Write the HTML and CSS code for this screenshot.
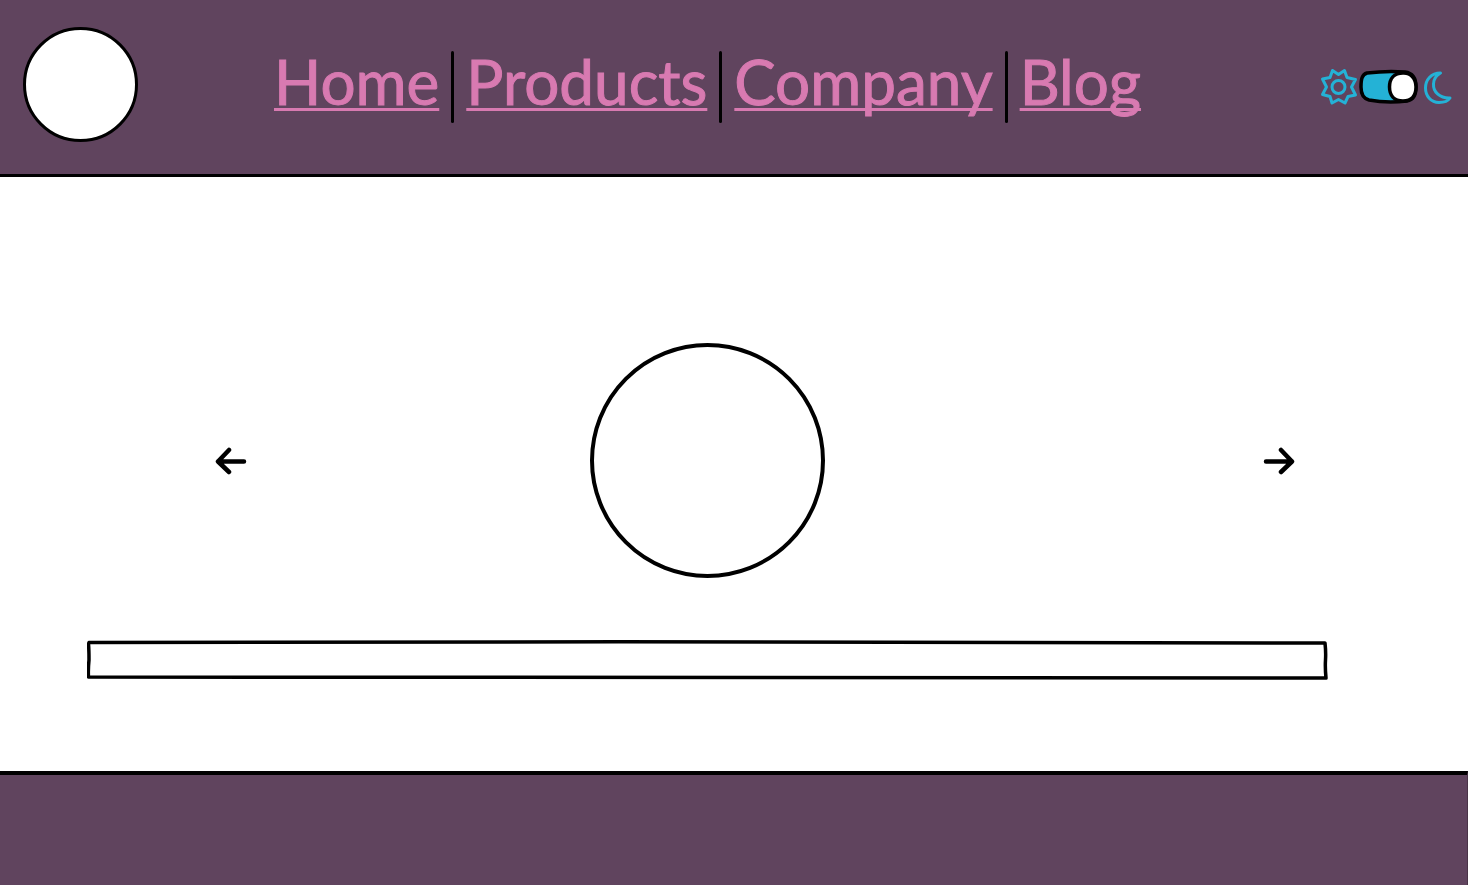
FILE: index.html
```html
<!DOCTYPE html>
<html lang="en">
<head>
<meta charset="utf-8">
<meta name="viewport" content="width=device-width, initial-scale=1">
<title>Home</title>
<link rel="stylesheet" href="styles.css">
</head>
<body>
<header class="header">
  <div class="logo"></div>
  <nav class="nav" aria-label="Main">
    <a class="nav-link" href="#home">Home</a>
    <span class="divider"></span>
    <a class="nav-link" href="#products">Products</a>
    <span class="divider"></span>
    <a class="nav-link" href="#company">Company</a>
    <span class="divider"></span>
    <a class="nav-link" href="#blog">Blog</a>
  </nav>
  <label class="theme">
    <svg class="sun" viewBox="0 0 38 38" aria-hidden="true"><path d="M12.500 2.500 18.500 6.500 24.500 2.500 27 9.500 35.500 11.500 31.500 19 35.500 27 28 28.500 25 35 18.500 31.500 12 35 10 28.500 2.500 26.500 6.500 19 2.500 11 10 9.500Z"/><circle cx="18.500" cy="19" r="6.500"/></svg>
    <span class="toggle">
      <input class="toggle-input" type="checkbox" role="switch" aria-label="Theme" checked>
      <svg class="toggle-art" viewBox="0 0 60 36" aria-hidden="true"><path class="track" d="M8 4Q28 1.500 46 3C54 4 57 10 57 18 57 27 54 31 48 32Q28 34.500 10 31C4 29.500 2 25 2 18 2 10 3 5.500 8 4Z"/><path class="knob" d="M44 4C52 3.500 57 10 57 18 57 27 52 32 44 32 35 32 30.500 26 30.500 18 30.500 10 35 4 44 4Z"/></svg>
    </span>
    <svg class="moon" viewBox="0 0 30 36" aria-hidden="true"><path d="M17.500 4C8 4 2.500 11 2.500 19 2.500 27 8 33.500 16 33.500 21 33.500 25 32 27 29 17 29.500 10 23 10.500 15 10.500 10 14 6 17.500 4Z"/></svg>
  </label>
</header>
<main class="main">
  <section class="carousel" aria-label="Carousel">
    <button class="arrow arrow-prev" type="button" aria-label="Previous"><svg viewBox="0 0 32 28" aria-hidden="true"><path d="M29 14.500H3M14 3 3 14.500 14 25"/></svg></button>
    <div class="slide"></div>
    <button class="arrow arrow-next" type="button" aria-label="Next"><svg viewBox="0 0 32 28" aria-hidden="true"><path d="M3 14.500H29M18 3 29 14.500 18 25"/></svg></button>
  </section>
  <div class="caption">
    <svg class="caption-frame" viewBox="0 0 1241 40" preserveAspectRatio="none" aria-hidden="true"><path d="M2 2.500Q620 1 1238 3 1239 12 1238.500 20T1239 38Q620 39 1.500 37 1 30 2 20 2 10 1.500 4Z"/></svg>
  </div>
</main>
<footer class="footer"></footer>
</body>
</html>
```
FILE: styles.css
```css
* { box-sizing: border-box; }
body {
  margin: 0;
  min-height: 100vh;
  display: flex;
  flex-direction: column;
  background: #fff;
  font-family: Lato, sans-serif;
}
.header {
  display: flex;
  align-items: flex-start;
  padding: 27px 15px 32px 23px;
  background: #60445e;
  border-bottom: 3px solid #000;
}
.logo {
  width: 115px;
  height: 115px;
  border: 3px solid #000;
  border-radius: 50%;
  background: #fff;
}
.nav {
  display: flex;
  align-items: flex-start;
  gap: 12px;
  margin: 24px auto 0 136px;
}
.nav-link {
  color: #d87ab1;
  font-size: 62px;
  line-height: 60px;
  -webkit-text-stroke: 1px #d87ab1;
  text-decoration: underline;
  text-decoration-thickness: 3px;
  text-decoration-skip-ink: none;
  text-underline-offset: 3px;
}
.divider {
  width: 3px;
  height: 72px;
  border-radius: 2px;
  background: #000;
}
.theme {
  display: flex;
  align-items: center;
  margin-top: 41px;
  gap: 1px;
}
.sun { width: 38px; height: 38px; }
.moon { width: 30px; height: 36px; margin-left: 3px; }
.sun, .moon { fill: none; stroke: #24b2d6; stroke-width: 3; stroke-linejoin: round; }
.toggle { position: relative; width: 60px; height: 36px; }
.toggle-input { position: absolute; inset: 0; width: 100%; height: 100%; margin: 0; opacity: 0; }
.toggle-art { display: block; width: 100%; height: 100%; stroke: #000; stroke-width: 3.5; }
.track { fill: #24b2d6; }
.knob { fill: #fff; }
.main { padding: 166px 140px 91px 87px; }
.carousel {
  display: grid;
  grid-template-columns: 1fr auto 1fr;
  align-items: center;
  padding: 0 33px;
}
.arrow {
  padding: 0;
  border: 0;
  background: none;
  line-height: 0;
}
.arrow svg { width: 32px; height: 28px; fill: none; stroke: #000; stroke-width: 4.5; stroke-linecap: round; stroke-linejoin: round; }
.arrow-prev { justify-self: start; margin-left: 95px; }
.arrow-next { justify-self: end; }
.slide {
  width: 235px;
  height: 235px;
  border: 4px solid #000;
  border-radius: 50%;
}
.caption { margin-top: 62px; height: 40px; }
.caption-frame { display: block; width: 100%; height: 100%; fill: none; stroke: #000; stroke-width: 3.5; stroke-linejoin: round; }
.footer {
  flex: 1;
  min-height: 111px;
  border-top: 4px solid #000;
  border-right: 1px solid #4a3448;
  background: #60445e;
}
```
